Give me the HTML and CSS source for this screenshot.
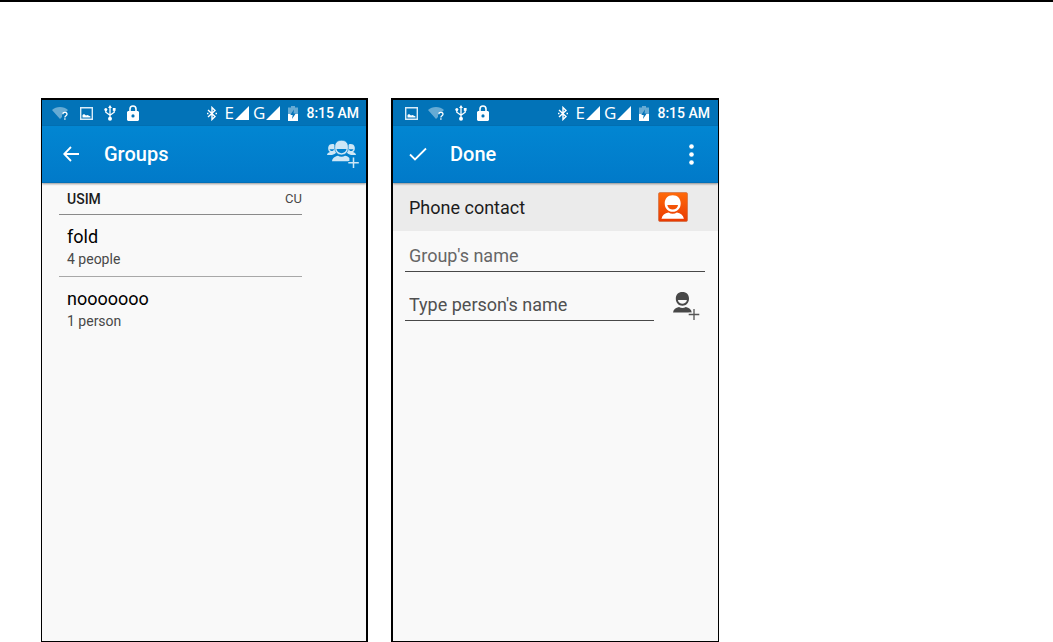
FILE: index.html
```html
<!DOCTYPE html>
<html lang="en">
<head>
  <meta charset="UTF-8">
  <meta name="viewport" content="width=device-width, initial-scale=1.0">
  <title>Contact groups</title>
  <link rel="stylesheet" href="styles.css">
</head>
<body>
  <!-- shared icons -->
  <svg class="sprite" aria-hidden="true">
    <symbol id="wifi" viewBox="0 0 17 14">
      <path d="M0 4C4 0 12 0 16 4L13 7H10v4L8 13z" fill="#fff" fill-opacity=".4"/>
      <path d="M10.8 8.2c0-2.4 4.2-2.4 4.2 0 0 1.6-2.1 1.6-2.1 3.3M12.9 12.3v1.4" fill="none" stroke="#fff" stroke-width="1.3"/>
    </symbol>
    <symbol id="picture" viewBox="0 0 13 13">
      <path d="M.7.7h11.6v11.6H.7z" fill="none" stroke="#d9ecf8" stroke-width="1.4"/>
      <path d="M2.500 10.500V8l1.500-1 2 1.500 1.500-.5 3 1.500v1z" fill="#fff"/>
    </symbol>
    <symbol id="usb" viewBox="0 0 12 16">
      <path d="M6 2v11M1.800 4v3.200L6 10.300M10.200 4v3.200L6 10.300" fill="none" stroke="#fff" stroke-width="1.3"/>
      <path d="M6 0l2 3H4z" fill="#fff"/>
      <path d="M8.800 3h2.800v2.800H8.800z" fill="#fff"/>
      <circle cx="1.8" cy="4.4" r="1.5" fill="#fff"/>
      <circle cx="6" cy="13.7" r="2" fill="#fff"/>
    </symbol>
    <symbol id="lock" viewBox="0 0 12 16">
      <path d="M3 7V4a3 3 0 0 1 6 0v3" fill="none" stroke="#fff" stroke-width="1.6"/>
      <path fill-rule="evenodd" d="M1 6h10l1 1v8l-1 1H1l-1-1V7zM6 9.300a1.600 1.600 0 1 0 0 3.200 1.600 1.600 0 0 0 0-3.200z" fill="#fff"/>
    </symbol>
    <symbol id="bluetooth" viewBox="0 0 10 15">
      <path d="M1 4l7 6.500L5 13.500v-12L8 4.500 1 11" fill="none" stroke="#fff" stroke-width="1.4"/>
      <path d="M0 6.800h1.500v1.400H0zM8.500 6.800H10v1.400H8.500z" fill="#fff"/>
    </symbol>
    <symbol id="signal" viewBox="0 0 14 14">
      <path d="M14 0v14H0z" fill="#fff"/>
    </symbol>
    <symbol id="battery" viewBox="0 0 10 15">
      <path d="M3 0h4v1.500h3V8H0V1.500h3z" fill="#fff" fill-opacity=".4"/>
      <path d="M0 8h10v7H0z" fill="#fff"/>
      <path d="M6 3.500L2.300 9h2.400L4 13l3.700-5.500H5.500z" fill="#0273b8"/>
    </symbol>
    <symbol id="back" viewBox="0 0 16 16">
      <path d="M16 8H1.500M8 1L1.200 8 8 15" fill="none" stroke="#fff" stroke-width="1.8"/>
    </symbol>
    <symbol id="check" viewBox="0 0 18 14">
      <path d="M1 7.500l5 5L17 1.500" fill="none" stroke="#fff" stroke-width="1.8"/>
    </symbol>
    <symbol id="more" viewBox="0 0 5 21">
      <circle cx="2.5" cy="2.5" r="2.3" fill="#fff"/>
      <circle cx="2.5" cy="10.5" r="2.3" fill="#fff"/>
      <circle cx="2.5" cy="18.5" r="2.3" fill="#fff"/>
    </symbol>
    <symbol id="add-group" viewBox="0 0 32 29">
      <g fill="#cfe7f6">
        <path fill-rule="evenodd" d="M5.500 4C8 4 8 6 8 8.500l1.500 4-2 1.500-2.500 1H0c.3-1.800 1.500-2.500 3-3C1.500 11 1 9.500 1.200 7.500 1.500 5 3 4 5.500 4zM2.600 9.200c.4 2.400 4 2.400 4.600 0z"/>
        <path fill-rule="evenodd" d="M23.500 4C21 4 21 6 21 8.500l-1.500 4 2 1.500 2.500 1h5c-.3-1.800-1.500-2.500-3-3 1.500-1 2-2.500 1.800-4.500C27.500 5 26 4 23.500 4zM21.800 9.200c.6 2.400 4.200 2.400 4.600 0z"/>
        <path fill-rule="evenodd" d="M14.500.3C19 .3 21.300 3 21.300 7.500s-2.800 7.500-6.800 7.500-6.800-3-6.800-7.500S10 .3 14.500.3zM9.500 9c.7 5.500 9.300 5.500 10 0z"/>
        <path d="M5 21.300c.5-3.500 2.800-4.800 6-5.500 2 1.300 5 1.300 7 0 2 .4 3.400 1 4.400 2.200v3.300z"/>
      </g>
      <path d="M14.500.3C19 .3 21.300 3 21.300 7.500s-2.800 7.500-6.800 7.500-6.800-3-6.800-7.500S10 .3 14.500.3z" fill="none" stroke="#0381cc" stroke-width=".7"/>
      <path d="M26.500 17.500v10.500M21.300 22.800h10.500" stroke="#0381cc" stroke-width="3.5"/>
      <path d="M26.500 17.500v10.500M21.300 22.800h10.500" stroke="#cfe7f6" stroke-width="1.5"/>
    </symbol>
    <symbol id="contact" viewBox="0 0 30 30">
      <linearGradient id="orange" x1="0" y1="0" x2="0" y2="1">
        <stop offset="0" stop-color="#ff6a0a"/>
        <stop offset="1" stop-color="#e93a02"/>
      </linearGradient>
      <rect x=".5" y=".5" width="29" height="29" rx="1.5" fill="url(#orange)" stroke="#c9683c" stroke-width=".6"/>
      <path fill-rule="evenodd" d="M14.700 3.200c5 0 8 3.300 8 8.300s-3.500 8.300-8 8.300-8-3.300-8-8.300 3-8.300 8-8.300zM9.300 13c1 6 9.800 6 10.800 0z" fill="#fff"/>
      <path d="M3.500 26.700c.8-3.700 3.200-5.400 7-6.200 2.600 1.600 5.800 1.600 8.400 0 3.800.8 6.200 2.500 7 6.200z" fill="#fff"/>
    </symbol>
    <symbol id="add-person" viewBox="0 0 28 31">
      <path fill-rule="evenodd" d="M10.400 2C14.500 2 17 4.500 17 8.700s-2.900 7-6.600 7-6.600-2.800-6.600-7S6.300 2 10.400 2zM5.900 10c.8 5 8.200 5 9 0z" fill="#484848"/>
      <path d="M1 22.500c.6-3.300 2.800-4.800 6-5.500 2.200 1.300 4.600 1.300 6.800 0 3.200.7 5.400 2.200 6 5.500z" fill="#484848"/>
      <path d="M22 19v11M16.700 24.500h10.600" stroke="#f9f9f9" stroke-width="3.5"/>
      <path d="M22 19v11M16.700 24.500h10.600" stroke="#555" stroke-width="1.3"/>
    </symbol>
  </svg>

  <main class="page">
    <section class="phone">
      <div class="statusbar">
        <div class="notifications">
          <svg class="wifi"><use href="#wifi"/></svg>
          <svg class="picture"><use href="#picture"/></svg>
          <svg class="usb"><use href="#usb"/></svg>
          <svg class="lock"><use href="#lock"/></svg>
        </div>
        <div class="system">
          <svg class="bluetooth"><use href="#bluetooth"/></svg>
          <span class="network">E<svg class="signal"><use href="#signal"/></svg></span>
          <span class="network">G<svg class="signal"><use href="#signal"/></svg></span>
          <svg class="battery"><use href="#battery"/></svg>
          <span class="time">8:15 AM</span>
        </div>
      </div>
      <header class="toolbar">
        <button class="icon-button" aria-label="Back"><svg class="back"><use href="#back"/></svg></button>
        <h1 class="title">Groups</h1>
        <button class="icon-button" aria-label="Add group"><svg class="add-group"><use href="#add-group"/></svg></button>
      </header>
      <div class="groups">
        <div class="account"><h2 class="account-name">USIM</h2><span class="carrier">CU</span></div>
        <ul class="group-list">
          <li class="group">
            <div class="group-name">fold</div>
            <div class="group-count">4 people</div>
          </li>
          <li class="group">
            <div class="group-name">nooooooo</div>
            <div class="group-count">1 person</div>
          </li>
        </ul>
      </div>
    </section>

    <section class="phone phone-edit">
      <div class="statusbar">
        <div class="notifications">
          <svg class="picture"><use href="#picture"/></svg>
          <svg class="wifi"><use href="#wifi"/></svg>
          <svg class="usb"><use href="#usb"/></svg>
          <svg class="lock"><use href="#lock"/></svg>
        </div>
        <div class="system">
          <svg class="bluetooth"><use href="#bluetooth"/></svg>
          <span class="network">E<svg class="signal"><use href="#signal"/></svg></span>
          <span class="network">G<svg class="signal"><use href="#signal"/></svg></span>
          <svg class="battery"><use href="#battery"/></svg>
          <span class="time">8:15 AM</span>
        </div>
      </div>
      <header class="toolbar">
        <button class="done-button"><svg class="check"><use href="#check"/></svg>Done</button>
        <button class="icon-button" aria-label="More options"><svg class="more"><use href="#more"/></svg></button>
      </header>
      <div class="contact-type">
        <span>Phone contact</span>
        <svg class="contact"><use href="#contact"/></svg>
      </div>
      <form class="group-form">
        <input class="field" type="text" placeholder="Group's name" aria-label="Group's name">
        <div class="person-row">
          <input class="field field-person" type="text" placeholder="Type person's name" aria-label="Type person's name">
          <button class="icon-button" type="button" aria-label="Add person"><svg class="add-person"><use href="#add-person"/></svg></button>
        </div>
      </form>
    </section>
  </main>
</body>
</html>
```
FILE: styles.css
```css
* {
  box-sizing: border-box;
}
body {
  margin: 0;
  background: #fff;
  font-family: Roboto, "Liberation Sans", sans-serif;
}
svg {
  display: block;
  flex: none;
}
.sprite {
  position: absolute;
  width: 0;
  height: 0;
}
.page {
  display: flex;
  gap: 23px;
  min-height: 100vh;
  padding: 96px 41px 0;
  border-top: 2px solid #000;
}
.phone {
  flex: 0 1 327px;
  min-width: 0;
  border: solid #000;
  border-width: 2px 2px 1px 1px;
  background: #f9f9f9;
}
.phone-edit {
  flex-basis: 328px;
  border-width: 2px 1px 1px 2px;
}

/* status bar */
.statusbar {
  display: flex;
  justify-content: space-between;
  align-items: center;
  height: 26px;
  padding: 0 7px 0 10px;
  background: #0273b8;
  color: #fff;
}
.phone-edit .statusbar {
  padding: 0 8px 0 12px;
}
.notifications {
  display: flex;
  align-items: center;
  gap: 11px;
}
.phone-edit .notifications {
  gap: 10px;
}
.system {
  display: flex;
  align-items: center;
  gap: 8px;
}
.network {
  display: flex;
  align-items: center;
  gap: 1px;
  margin-right: -4px;
  font: 17px/20px "Open Sans", sans-serif;
}
.network + .battery {
  margin-left: 4px;
}
.time {
  font-size: 14px;
  font-weight: 500;
  line-height: 20px;
}
.wifi {
  width: 17px;
  height: 14px;
}
.picture {
  width: 13px;
  height: 13px;
}
.usb,
.lock {
  width: 12px;
  height: 16px;
}
.bluetooth,
.battery {
  width: 10px;
  height: 15px;
}
.signal {
  width: 14px;
  height: 14px;
}

/* toolbar */
.toolbar {
  display: flex;
  align-items: center;
  height: 57px;
  padding: 0 7px 0 21px;
  background: linear-gradient(#0286d2, #017ac9);
  border-bottom: 1px solid #0270b8;
  box-shadow: 0 1px 2px rgba(0, 0, 0, .4);
  position: relative;
}
.phone-edit .toolbar {
  padding: 0 24px 0 16px;
}
.icon-button,
.done-button {
  padding: 0;
  border: 0;
  background: none;
}
.title {
  flex: 1;
  margin: 0 0 0 25px;
}
.title,
.done-button {
  color: #fff;
  font: 500 20px/24px Roboto, sans-serif;
}
.done-button {
  display: flex;
  flex: 1;
  align-items: center;
  gap: 23px;
}
.back {
  width: 16px;
  height: 16px;
}
.check {
  width: 18px;
  height: 14px;
}
.more {
  width: 5px;
  height: 21px;
}
.add-group {
  width: 32px;
  height: 29px;
}

/* group list */
.groups {
  padding: 0 64px 0 17px;
}
.account {
  display: flex;
  justify-content: space-between;
  align-items: center;
  height: 32px;
  padding-left: 8px;
  border-bottom: 1px solid #8a8a8a;
  font-size: 13px;
}
.account-name {
  margin: 0;
  color: #1c1c1c;
  font-size: 14px;
  font-weight: 500;
}
.carrier {
  color: #484848;
}
.group-list {
  margin: 0;
  padding: 0;
  list-style: none;
}
.group {
  padding: 10px 8px 7px;
}
.group:not(:last-child) {
  border-bottom: 1px solid #a8a8a8;
}
.group-name {
  color: #000;
  font-size: 18px;
  line-height: 24px;
}
.group-count {
  color: #484848;
  font-size: 14px;
  line-height: 20px;
}

/* new group form */
.contact-type {
  display: flex;
  justify-content: space-between;
  align-items: center;
  height: 48px;
  padding: 0 30px 0 16px;
  background: #ebebeb;
  color: #1c1c1c;
  font-size: 18px;
}
.contact {
  width: 30px;
  height: 30px;
}
.group-form {
  display: flex;
  flex-direction: column;
  gap: 17px;
  padding: 9px 13px 9px 12px;
}
.field {
  min-width: 0;
  height: 32px;
  padding: 0 4px;
  border: 0;
  border-bottom: 1px solid #484848;
  background: none;
  color: #1c1c1c;
  font: 18px/24px Roboto, sans-serif;
}
.field::placeholder {
  color: #666;
  opacity: 1;
}
.person-row {
  display: flex;
  gap: 18px;
  padding-right: 5px;
}
.field-person {
  flex: 1;
}
.field-person::placeholder {
  color: #505050;
}
.add-person {
  width: 28px;
  height: 31px;
}
```
